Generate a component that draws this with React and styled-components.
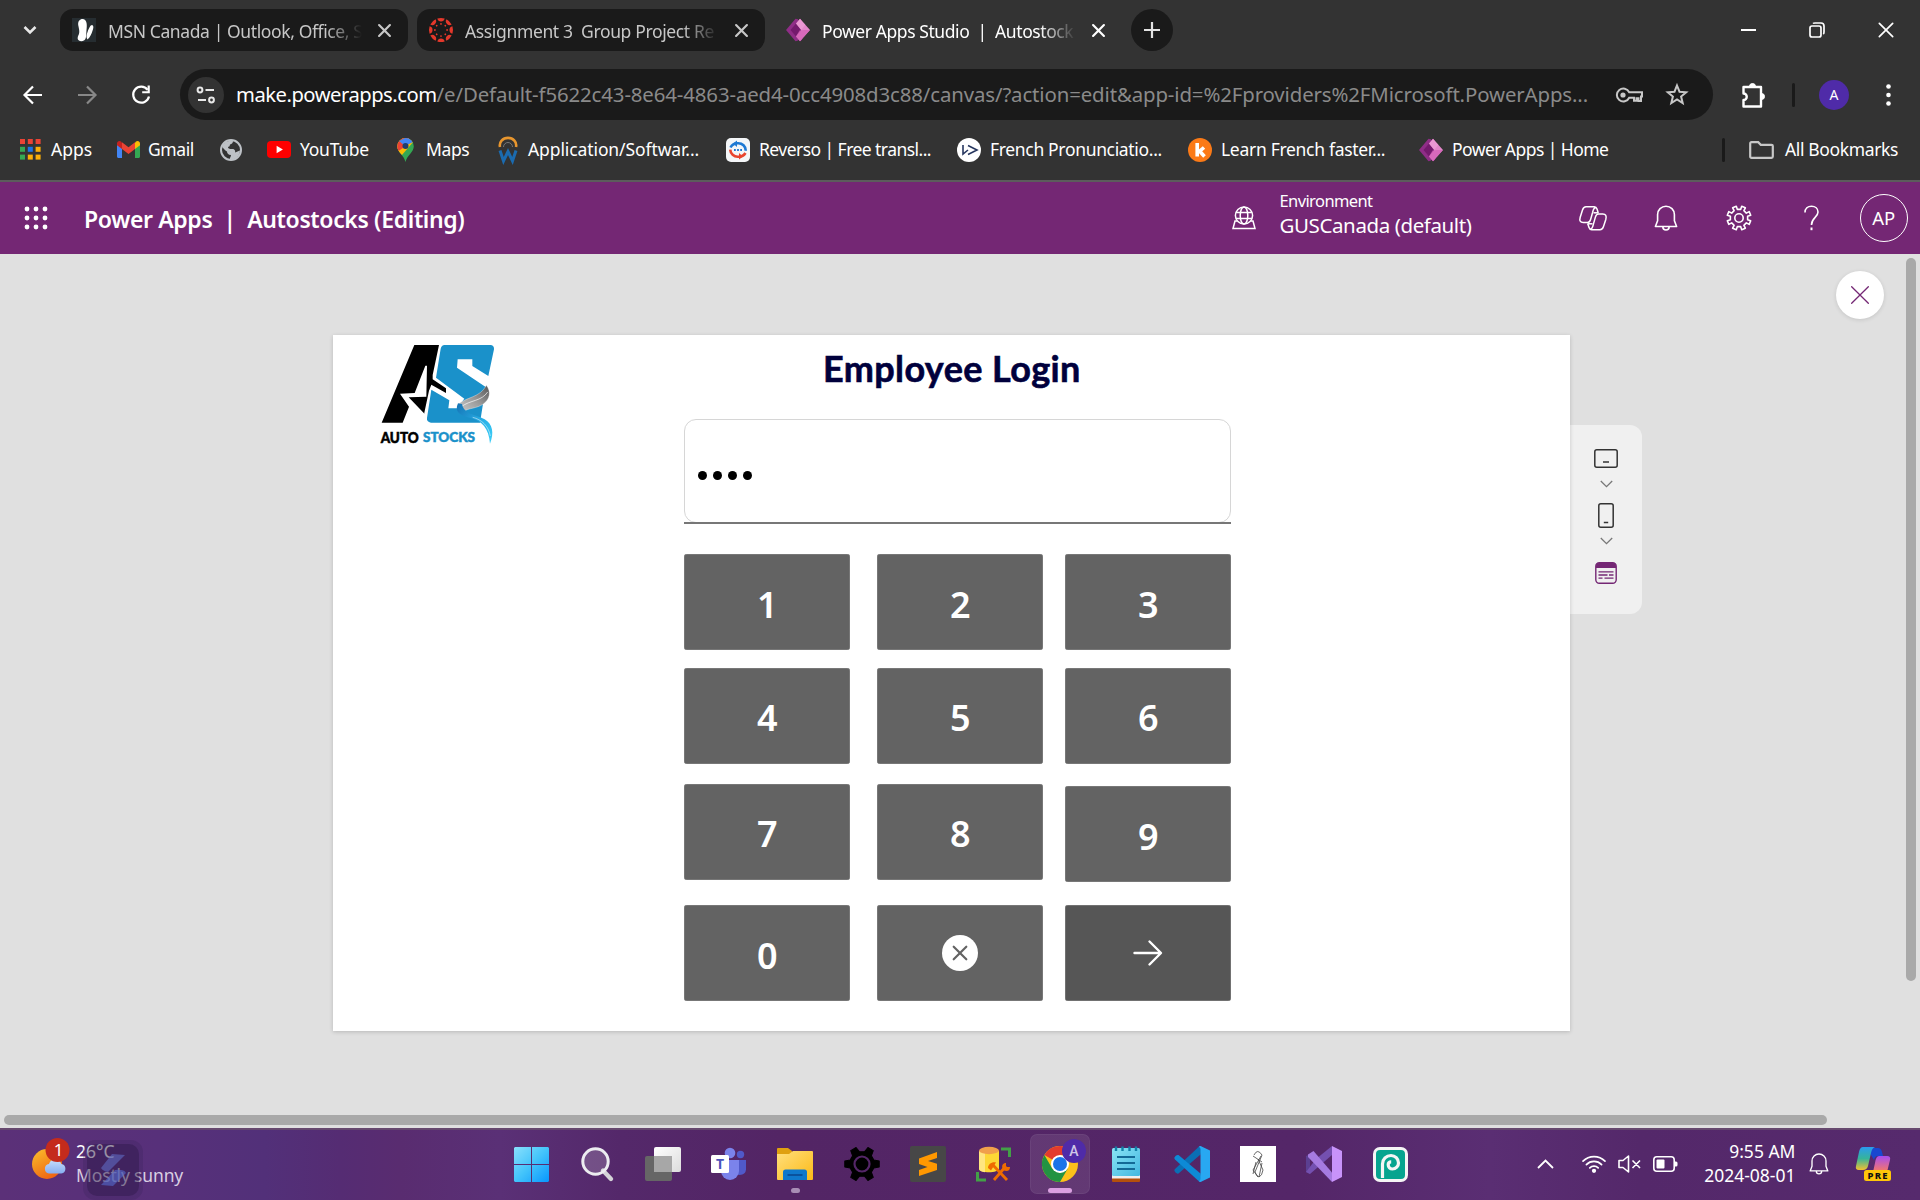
import React from "react";
import styled, { createGlobalStyle } from "styled-components";

const Global = createGlobalStyle`
  *{box-sizing:border-box}
  html,body{margin:0;padding:0;overflow:hidden}
  body{font-family:"Noto Sans","Open Sans",sans-serif;width:1920px;height:1200px}
  svg{display:block;flex:none;overflow:visible}
`;
const Desktop = styled.div`width:1920px;height:1200px;display:flex;flex-direction:column;overflow:hidden;`;
const Label = styled.span`
  font-size:${p => p.$s || 17.5}px;letter-spacing:${p => p.$ls || 0}px;font-weight:${p => p.$b || 400};
  color:${p => p.$c || "#fff"};white-space:pre;line-height:1.36;display:inline-block;
`;

/* ---------- browser ---------- */
const Browser = styled.header`height:182px;background:#333;border-bottom:2px solid #5c5c5c;flex:none;`;
const TabStrip = styled.div`height:60px;display:flex;align-items:center;padding:0 0 0 20px;`;
const Tab = styled.div`
  height:42px;width:${p => p.$w}px;margin-left:${p => p.$ml || 0}px;border-radius:13px;padding:0 17.500px 0 12px;
  background:${p => (p.$active ? "transparent" : "#1a1a1a")};display:flex;align-items:center;gap:12px;
`;
const TabTitle = styled.div`
  width:${p => p.$w}px;overflow:hidden;white-space:nowrap;padding-top:3px;
  mask-image:linear-gradient(90deg,#000 ${p => p.$w - 36}px,transparent);
`;
const TabClose = styled.div`margin-left:auto;`;
const NewTab = styled.div`width:42px;height:42px;border-radius:50%;background:#1a1a1a;display:grid;place-items:center;margin-left:9px;`;
const WindowButtons = styled.div`margin-left:auto;display:flex;`;
const WindowButton = styled.div`width:68.5px;height:60px;display:grid;place-items:center;`;
const Toolbar = styled.div`height:69px;display:flex;align-items:center;padding-left:6px;`;
const ToolButton = styled.div`width:${p => p.$w || 54}px;display:grid;place-items:center;flex:none;`;
const Omnibox = styled.div`width:1533px;flex:none;height:51px;margin-left:12px;border-radius:26px;background:#1a1a1a;display:flex;align-items:center;padding-left:8px;`;
const SiteInfo = styled.div`width:36px;height:36px;border-radius:50%;background:#333;display:grid;place-items:center;flex:none;`;
const Url = styled.div`width:1384px;padding-left:12px;white-space:nowrap;flex:none;`;
const Divider = styled.div`width:3px;height:24px;border-radius:2px;background:#1a1a1a;flex:none;`;
const Avatar = styled.div`width:30px;height:30px;border-radius:50%;background:#4f2ba8;display:grid;place-items:center;margin:0 0 0 24px;flex:none;`;
const Bookmarks = styled.div`height:51px;padding:0 0 9px 20px;display:flex;align-items:center;`;
const Bookmark = styled.div`width:${p => p.$w}px;display:flex;align-items:center;flex:none;`;
const BookIcon = styled.div`width:${p => p.$w || 32}px;padding-left:${p => p.$pl || 0}px;display:flex;align-items:center;flex:none;`;

const X = ({ s = 13, c = "#e3e3e3", w = 2.2 }) => (
  <svg width={s} height={s} viewBox="0 0 12 12"><path d="M1 1 11 11M11 1 1 11" stroke={c} strokeWidth={w * 12 / s} fill="none" strokeLinecap="round" /></svg>
);
const PowerApps = () => (
  <svg width="24" height="24" viewBox="0 0 24 24">
    <path d="M9.5.8 0 12l9.5 11.2 2.6-.6L14.5 12 12 1.2z" fill="#8f2d87" />
    <path d="M14 .8 4.5 12 14 23.200 16 22 18 12 15 1.500z" fill="#741a6d" />
    <path d="M14 .8 24 12 14 23.200 10 18.500 15.200 12 10 5.500z" fill="#e287c9" />
    <path d="m18.500 12-5 .5-3.500 6L14 23.200 24 12z" fill="#d35fb5" opacity=".75" />
    <path d="m14 .8 5.300 6L15.200 12 10 5.500z" fill="#f0a3da" opacity=".6" />
  </svg>
);
const Msn = () => (
  <svg width="24" height="24" viewBox="0 0 24 24"><rect width="24" height="24" fill="#262d31" />
    <path d="M12.300 22.300C8.500 24.500 4 22.500 6.300 17.500 8 14.500 7.200 12 6.300 7.500 5.500 3 8 .8 11 1c4.500.8 4 7 3.500 11-.4 4 .3 8.500-2.200 10.300z" fill="#fff" />
    <path d="M15.500 21.500c-1.700-2-1-5 .2-8C17 10.500 18.500 6.500 20.500 7.200c1.500.8.8 3.500 0 5.500-1 3-2.500 7-5 8.800z" fill="#fff" /></svg>
);
const Canvas = () => (
  <svg width="24" height="24" viewBox="-12 -12 24 24">
    {[0, 45, 90, 135, 180, 225, 270, 315].map(a => (
      <g key={a} transform={`rotate(${a})`} fill="#e4382b">
        <path d="M-3.700-11.400A12 12 0 0 1 3.700-11.400 3.800 3.800 0 0 1-3.700-11.400z" />
        <circle cx="0" cy="-6.100" r="0.900" /></g>))}
  </svg>
);
const Back = ({ c = "#fff" }) => (
  <svg width="20" height="20" viewBox="0 0 20 20"><path d="M19 10H2M10 1.500 1.500 10l8.500 8.500" fill="none" stroke={c} strokeWidth="2.200" /></svg>
);
const Forward = ({ c = "#888" }) => (
  <svg width="20" height="20" viewBox="0 0 20 20"><path d="M1 10h17M10 1.500 18.500 10 10 18.500" fill="none" stroke={c} strokeWidth="2.200" /></svg>
);
const Reload = () => (
  <svg width="20" height="20" viewBox="0 0 20 20"><path d="M16.600 4.800A8 8 0 1 0 18 11.500" fill="none" stroke="#fff" strokeWidth="2.200" /><path d="M18.800.5v7.700h-7.600v-2h5.400V.5z" fill="#fff" /></svg>
);
const Tune = () => (
  <svg width="20" height="18" viewBox="0 0 20 18" fill="none" stroke="#e8e8e8" strokeWidth="2"><circle cx="4" cy="4" r="2.400" /><path d="M9.500 4H18M2 14h8" /><circle cx="15.500" cy="14" r="2.400" /></svg>
);
const KeyIcon = () => (
  <svg width="28" height="16" viewBox="0 0 28 16" fill="none" stroke="#c7c7c7" strokeWidth="2"><path d="M14.200 5.200A6.500 6.500 0 1 0 14.200 10.800H19v3h2.500v-2.500h2V14H26V9.500h1V5.200z" /><circle cx="8" cy="8" r="2.600" fill="#c7c7c7" stroke="none" /></svg>
);
const Star = () => (
  <svg width="24" height="23" viewBox="0 0 24 23" fill="none" stroke="#c7c7c7" strokeWidth="2"><path d="m12 2.500 2.500 6.200 6.700.5-5.100 4.300 1.600 6.500-5.700-3.500L6.300 20l1.600-6.500L2.800 9.200l6.700-.5z" /></svg>
);
const Puzzle = () => (
  <svg width="24" height="28" viewBox="0 0 24 28"><path d="M2.500 6H20V25.500H2.500V19a3.200 3.200 0 0 0 0-6.500z" fill="none" stroke="#fff" strokeWidth="2.400" strokeLinejoin="round" /><path d="M8.500 5.500a3 3 0 0 1 6 0zM20.500 12.500a3 3 0 0 1 0 6z" fill="#fff" stroke="#fff" /></svg>
);
const AppsIcon = () => {
  const c = ["#ea4335", "#ea4335", "#ea4335", "#34a853", "#1a73e8", "#fbaf08", "#34a853", "#fbaf08", "#fbaf08"];
  return <svg width="21" height="21" viewBox="0 0 21 21">{c.map((f, i) => <rect key={i} x={(i % 3) * 7.800} y={Math.floor(i / 3) * 7.800} width="5" height="5" fill={f} />)}</svg>;
};
const Gmail = () => (
  <svg width="23" height="17" viewBox="0 0 23 17"><path d="M0 2v13.500C0 16.400.7 17 1.500 17H5V7z" fill="#4285f4" /><path d="M23 2v13.500c0 .9-.7 1.500-1.500 1.500H18V7z" fill="#34a853" /><path d="M18 2v6l5-3.700V2.500C23 .2 20.500-.7 18.700.7z" fill="#fbbc04" /><path d="M0 2.500v1.800L5 8V2L4.300.7C2.500-.7 0 .2 0 2.500z" fill="#c5221f" /><path d="M5 1.200v6.700l6.500 5 6.500-5V1.200l-6.500 5z" fill="#ea4335" /></svg>
);
const Globe = () => (
  <svg width="22" height="22" viewBox="0 0 22 22"><circle cx="11" cy="11" r="10" fill="#333" stroke="#bdc1c6" strokeWidth="2" /><path d="M2 8C4 3 9 1 13 2c0 2-1 3-3 3.500-.5 1.500 0 2-2 2.500 0 1.500 1 2 4 2s3.500 2 3 3.500c2-.5 3-1.500 5-2-.5 6-5 9.500-10 9-.5-2 1-2.500 1-4.500-3 0-4-2-4-3.500C5 12 4.500 10 2 8z" fill="#bdc1c6" /></svg>
);
const YouTube = () => (<svg width="24" height="17" viewBox="0 0 24 17"><rect width="24" height="17" rx="4" fill="#f00" /><path d="m9.600 4.800 6.300 3.700-6.300 3.700z" fill="#fff" /></svg>);
const Maps = () => (
  <svg width="17" height="24" viewBox="0 0 17 24"><defs><clipPath id="pin"><path d="M8.500 0A8.300 8.300 0 0 0 .2 8.300c0 6 6.500 8.500 8.300 15.700 1.800-7.200 8.300-9.700 8.300-15.700A8.300 8.300 0 0 0 8.500 0z" /></clipPath></defs>
    <g clipPath="url(#pin)"><rect width="17" height="24" fill="#34a853" /><path d="M0 0h17v3L5 17 0 13z" fill="#fbbc04" /><path d="M0 0h12L6 10 0 14z" fill="#ea4335" /><path d="M2 3 8 0h9v3.500L8 8z" fill="#4285f4" /></g><circle cx="8.500" cy="8" r="3" fill="#1f3d6e" /></svg>
);
const WpIcon = () => (
  <svg width="20" height="24" viewBox="0 0 20 24"><path d="M2 9A8.200 7.500 0 1 1 18 9" fill="none" stroke="#e8962e" strokeWidth="2.600" /><path d="M5.500 9a4.500 4.500 0 0 1 9 0" fill="none" stroke="#777" strokeWidth="1" /><path d="M2 12.500 5.500 23 10 13.500 14.500 23 18 12.500" fill="none" stroke="#1b6bb0" strokeWidth="3" /></svg>
);
const Reverso = () => (
  <svg width="24" height="24" viewBox="0 0 24 24"><rect width="24" height="24" rx="5" fill="#f4f6f8" /><path d="M4.500 9.500A8 8 0 0 1 12 5.200a7.500 7.500 0 0 1 7.800 7.500" fill="none" stroke="#1f79d3" strokeWidth="2.600" /><path d="m7 5.500 4-3v6.500z" fill="#1f79d3" /><path d="M19.500 15A8 8 0 0 1 12 18.700a7.500 7.500 0 0 1-7.800-7" fill="none" stroke="#e8452f" strokeWidth="2.600" /><path d="m17 18.500-4 3V15z" fill="#e8452f" /><path d="M8 12h1.800M11.100 12h1.800M14.200 12H16" stroke="#1f79d3" strokeWidth="1.800" /></svg>
);
const FrenchIcon = () => (<svg width="24" height="24" viewBox="0 0 24 24"><circle cx="12" cy="12" r="12" fill="#fff" /><path d="M6 7v9l5-4M11 7.500l9 4.500-9 4.500" fill="none" stroke="#27375f" strokeWidth="1.600" /></svg>);
const Kwiziq = () => (<svg width="24" height="24" viewBox="0 0 24 24"><circle cx="12" cy="12" r="12" fill="#fb7a17" /><path d="M9.200 5v13.500M16 9.500l-5.500 4.700M11.500 13l5 5.500" stroke="#fff" strokeWidth="3.600" fill="none" /></svg>);
const Folder = () => (<svg width="25" height="18" viewBox="0 0 25 18"><path d="M2.500 1.200h6.700l2.600 2.600h10.700c.8 0 1.300.6 1.300 1.300v10.400c0 .8-.5 1.300-1.300 1.300h-20c-.8 0-1.300-.5-1.300-1.300v-13c0-.8.5-1.300 1.300-1.300z" fill="none" stroke="#c7c7c7" strokeWidth="2.200" /></svg>);

/* ---------- power apps ---------- */
const AppBar = styled.div`height:72px;background:#742774;display:flex;align-items:center;flex:none;padding-left:23.500px;`;
const AppTitle = styled.div`margin-left:36.500px;width:1148px;padding-top:4px;flex:none;`;
const EnvText = styled.div`width:276.500px;margin-left:23.500px;padding-bottom:6px;display:flex;flex-direction:column;flex:none;`;
const BarIcon = styled.div`width:73.200px;display:grid;place-items:center;flex:none;`;
const UserCircle = styled.div`width:48px;height:48px;border:1.500px solid #fff;border-radius:50%;display:grid;place-items:center;margin-left:11px;flex:none;`;
const Workspace = styled.main`height:874px;background:#e0e0e0;position:relative;padding:81px 0 0 333px;display:flex;align-items:flex-start;flex:none;`;
const Page = styled.section`width:1237px;height:696px;background:#fff;box-shadow:0 1px 4px rgba(0,0,0,.18);display:flex;z-index:1;`;
const LogoBox = styled.div`width:351.400px;padding:8px 0 0 47px;flex:none;`;
const Login = styled.div`width:547px;display:flex;flex-direction:column;`;
const Heading = styled.h1`margin:0 0 0 -12px;height:84px;padding-top:11px;text-align:center;font:700 36px/44px Lato,sans-serif;letter-spacing:.4px;color:#00003c;-webkit-text-stroke:.6px #00003c;`;
const Pin = styled.div`height:104px;border:1px solid #d6d6d6;border-radius:12px;display:flex;align-items:center;gap:6px;padding:9px 0 0 13px;`;
const PinLine = styled.div`height:1.500px;background:#777;margin-top:-1px;margin-bottom:-.5px;`;
const PinDot = styled.i`width:9px;height:9px;border-radius:50%;background:#000;`;
const Keypad = styled.div`display:flex;margin-top:31px;`;
const KeyColumn = styled.div`width:${p => p.$w}px;margin-right:${p => p.$mr || 0}px;display:flex;flex-direction:column;`;
const Key = styled.button`
  border:0;padding:${p => (p.$icon ? 0 : 4)}px 0 ${p => (p.$icon ? 1 : 0)}px;height:96.300px;margin:${p => p.$mt}px 0 0;border-radius:3px;background:${p => (p.$dark ? "#565656" : "#636363")};
  color:#fff;font:600 36px "Noto Sans",sans-serif;display:grid;place-items:center;box-shadow:inset 0 0 0 .5px #8c8c8c;
`;
const SidePanel = styled.aside`width:72px;height:189px;margin-top:90px;background:#f0f0f0;border-radius:0 12px 12px 0;display:flex;flex-direction:column;align-items:center;padding-top:24px;`;
const ChevBox = styled.div`padding:${p => p.$t}px 0 ${p => p.$b}px;`;
const CloseButton = styled.div`position:absolute;left:1836px;top:17px;width:48px;height:48px;border-radius:50%;background:#fff;display:grid;place-items:center;box-shadow:0 1px 4px rgba(0,0,0,.12);`;
const VScroll = styled.div`position:absolute;left:1906px;top:4px;width:10px;height:723px;border-radius:5px;background:#a9a9a9;`;
const HScroll = styled.div`position:absolute;left:4px;top:861px;width:1823px;height:10px;border-radius:5px;background:#a9a9a9;`;

const Logo = () => (
  <svg width="116" height="103" viewBox="180 69 348 309">
    <defs>
      <linearGradient id="steel" x1="1" y1="0" x2="0" y2="1"><stop offset="0" stopColor="#555" /><stop offset=".5" stopColor="#999" /><stop offset="1" stopColor="#ccc" /></linearGradient>
      <linearGradient id="wave" x1="0" y1="0" x2="1" y2="1"><stop offset="0" stopColor="#1573b5" /><stop offset=".6" stopColor="#29b2e8" /><stop offset="1" stopColor="#3fd0f8" /></linearGradient>
    </defs>
    <path d="M283 75H357L338 165V178L378 205V219L334 194 327 212 312 283 268 246V258L248 308H185z" fill="#000" />
    <path d="M240 221 284 219 316 137H321L319 230 266 232 312 280V290L268 262z" fill="#fff" />
    <path d="M374 75H513Q523 77 522 88L505 168 457 138V118H413L411 143 497 201 480 308H333Q319 305 321 294L334 209 388 241 385 265H412L430 240 433 236 348 173 362 86Q364 76 374 75z" fill="#1a91ca" />
    <path d="M499 196C514 215 510 238 490 252 470 266 445 264 432 274L414 254C438 230 480 234 499 196z" fill="url(#steel)" stroke="#fff" strokeWidth="1" />
    <path d="M424 260C450 240 485 244 503 216" fill="none" stroke="#fff" strokeWidth="2" />
    <path d="M414 250C402 275 420 288 452 294 485 302 507 325 510 371 523 340 518 312 494 298 470 284 432 284 426 252z" fill="url(#wave)" />
    <path d="M458 292C484 298 506 318 511 348" fill="none" stroke="#fff" strokeWidth="1.500" />
    <text x="182" y="370" textLength="114" lengthAdjust="spacingAndGlyphs" fontFamily="Lato,sans-serif" fontWeight="900" fontSize="43" fill="#000" stroke="#000" strokeWidth="1.500">AUTO</text>
    <text x="309" y="366" textLength="156" lengthAdjust="spacingAndGlyphs" fontFamily="Lato,sans-serif" fontWeight="900" fontSize="39" fill="#1a91ca" stroke="#1a91ca" strokeWidth="1.500">STOCKS</text>
  </svg>
);
const Waffle = () => (<svg width="24" height="24" viewBox="0 0 24 24">{[3, 12, 21].map(y => [3, 12, 21].map(x => <circle key={x + "" + y} cx={x} cy={y} r="2.400" fill="#fff" />))}</svg>);
const EnvIcon = () => (
  <svg width="24" height="24" viewBox="0 0 24 24" fill="none" stroke="#fff" strokeWidth="1.500"><circle cx="12" cy="9.500" r="8.600" /><ellipse cx="12" cy="9.500" rx="3.800" ry="8.600" /><path d="M4 6.500h16M4 12.500h16M5 15H3L1 22.500h22L21 15h-2" /></svg>
);
const lobe = "M19.200 6.800 18 3C17.500 1.500 16.800.8 15.300.8H7C5 .8 4.200 1.800 3.500 4L1.200 11.200C.2 14.800 1.300 16.500 4.200 16.500H8.500C10.300 16.500 11 15.500 11.600 13.500L13.600 6.500C14.200 4 14.500 1.500 17 1.500";
const Copilot = () => (
  <svg width="28" height="25" viewBox="0 0 28 25" fill="none" stroke="#fff" strokeWidth="1.500" strokeLinejoin="round">
    <path d={lobe} /><path d={lobe} transform="rotate(180 14 12.300)" />
    <path d="M14.500 6.800h5" /><path d="M8.500 17.800h5" />
  </svg>
);
const Bell = ({ s = 24 }) => (<svg width={s} height={s * 26 / 24} viewBox="0 0 24 26" fill="none" stroke="#fff" strokeWidth="1.600" strokeLinejoin="round"><path d="M12 1.200c4.700 0 8.400 3.700 8.400 8.400v6.200l2.200 5.700H1.400l2.200-5.700V9.600C3.600 4.900 7.300 1.200 12 1.200zM8.800 21.800a3.200 3.200 0 0 0 6.400 0" /></svg>);
const gear = (n, ro, ri, t) => {
  let d = "";
  for (let i = 0; i < n; i++) {
    const c = (i * 2 * Math.PI) / n - Math.PI / 2, h = Math.PI / n;
    [[ri, -h * t[0]], [ro, -h * t[1]], [ro, h * t[1]], [ri, h * t[0]]].forEach(([r, a], j) => {
      d += `${i || j ? "L" : "M"}${(r * Math.cos(c + a)).toFixed(2)} ${(r * Math.sin(c + a)).toFixed(2)}`;
    });
  }
  return d + "z";
};
const Gear = () => (<svg width="26" height="26" viewBox="-13 -13 26 26" fill="none" stroke="#fff" strokeWidth="1.600" strokeLinejoin="round"><path d={gear(8, 12, 8.800, [0.5, 0.42])} transform="rotate(22.500)" /><circle r="4.200" /></svg>);
const Question = () => (<svg width="16" height="26" viewBox="0 0 16 26" fill="none" stroke="#fff" strokeWidth="1.600"><path d="M1 7.500C1 3.500 3.800 1.200 7.500 1.200S14 3.500 14 7c0 5.500-6.500 5.500-6.500 13" /><path d="M7.500 22.500v2.700" strokeWidth="2" /></svg>);
const Chev = () => (<svg width="13" height="8" viewBox="0 0 13 8"><path d="m.8 1 5.700 5.700L12.200 1" fill="none" stroke="#777" strokeWidth="1.300" /></svg>);

/* ---------- taskbar ---------- */
const Taskbar = styled.footer`
  height:72px;border-top:2px solid #67496f;padding-bottom:2px;display:flex;align-items:center;flex:none;position:relative;
  background:linear-gradient(90deg,#5b3078 0,#57307a 160px,#523079 265px,#552c73 340px,#592c70 400px,#5a3076 500px,#54286a 620px,#532565 780px,#542668 1300px,#5a2e73 1490px,#54286a 1640px,#562a6d 1920px);
`;
const Weather = styled.div`width:498px;display:flex;align-items:center;padding-left:30px;flex:none;`;
const WeatherText = styled.div`display:flex;flex-direction:column;margin-left:8px;`;
const Slot = styled.div`width:66.100px;height:60px;display:grid;place-items:center;position:relative;flex:none;`;
const Tile = styled.div`width:60px;height:60px;border-radius:7px;background:rgba(255,255,255,.09);box-shadow:inset 0 0 0 1px rgba(255,255,255,.05);display:grid;place-items:center;`;
const Mark = styled.i`position:absolute;bottom:1px;left:${p => 33 - p.$w / 2}px;width:${p => p.$w}px;height:5px;border-radius:3px;background:${p => p.$c};`;
const Tray = styled.div`flex:1;display:flex;align-items:center;justify-content:flex-end;padding-right:29px;`;
const Clock = styled.div`display:flex;flex-direction:column;align-items:flex-end;width:107px;`;
const TrayEnd = styled.div`margin-left:12.500px;`;
const Ghost = styled.div`position:absolute;left:83px;top:10px;width:60px;height:60px;border-radius:12px;background:rgba(50,30,80,.22);display:grid;place-items:center;`;
const GhostInner = styled.div`width:52px;height:52px;border-radius:10px;background:rgba(35,20,60,.32);display:grid;place-items:center;`;

const Sun = () => (
  <svg width="38" height="44" viewBox="0 0 38 44">
    <defs><linearGradient id="sun" x1="0" y1="0" x2=".6" y2="1"><stop offset="0" stopColor="#fbc02b" /><stop offset="1" stopColor="#ef6412" /></linearGradient><linearGradient id="cloud" x1="0" y1="0" x2="0" y2="1"><stop offset="0" stopColor="#c7ddfb" /><stop offset="1" stopColor="#86aef0" /></linearGradient></defs>
    <circle cx="17" cy="22" r="15" fill="url(#sun)" /><path d="M19 31.500a4.800 4.800 0 0 1 0-9.500 6.500 6.500 0 0 1 12.300 0 4.800 4.800 0 0 1 0 9.500z" fill="url(#cloud)" />
    <circle cx="27.500" cy="8" r="12" fill="#c42b1c" /><text x="28.500" y="14" textAnchor="middle" fontFamily="Noto Sans" fontSize="17" fill="#fff">1</text>
  </svg>
);
const Win = () => (<svg width="35" height="35" viewBox="0 0 35 35"><defs><linearGradient id="win" x1="0" y1="0" x2="1" y2="1"><stop offset="0" stopColor="#8ae0fb" /><stop offset=".5" stopColor="#43c4fb" /><stop offset="1" stopColor="#0896fd" /></linearGradient></defs><path d="M1 0h16v17H0V1zM18 0h16l1 1v16H18zM0 18h17v17H1l-1-1zM18 18h17v16l-1 1H18z" fill="url(#win)" /></svg>);
const Search = () => (<svg width="32" height="34" viewBox="0 0 32 34"><path d="m22 23.500 8 8.500" stroke="#d4d4d8" strokeWidth="4.400" strokeLinecap="round" /><circle cx="14.500" cy="14.500" r="12.700" fill="rgba(255,255,255,.18)" stroke="#ececf0" strokeWidth="3" /></svg>);
const TaskView = () => (<svg width="36" height="34" viewBox="0 0 36 34"><defs><linearGradient id="tv" x1="0" y1="0" x2="1" y2="1"><stop offset="0" stopColor="#fff" /><stop offset="1" stopColor="#dcdcdc" /></linearGradient></defs><rect y="9" width="27" height="25" rx="2" fill="#666" /><rect x="9" width="27" height="25" rx="2" fill="url(#tv)" /><path d="M9 9h18v16H9z" fill="#a7a7a7" /></svg>);
const Teams = () => (
  <svg width="36" height="34" viewBox="0 0 36 34"><circle cx="29.500" cy="7.500" r="3.700" fill="#5059c9" /><circle cx="19" cy="6" r="5.300" fill="#7b83eb" /><path d="M25 13h10v9.500a6 6 0 0 1-10 4z" fill="#5059c9" /><path d="M10 13h18v11a9 9 0 0 1-18 0z" fill="#7b83eb" /><rect y="8" width="18" height="18" rx="1.500" fill="#fff" /><text x="9" y="22" textAnchor="middle" fontFamily="Noto Sans" fontWeight="700" fontSize="14" fill="#4b53bc">T</text></svg>
);
const Explorer = () => (<svg width="36" height="34" viewBox="0 0 36 34"><defs><linearGradient id="ex" x1="0" y1="0" x2="1" y2="1"><stop offset="0" stopColor="#ffdf7d" /><stop offset="1" stopColor="#fcba17" /></linearGradient></defs><path d="M0 2Q0 1 1 1h10l4 3v4H0z" fill="#dfa010" /><path d="M0 7h12l4-3h19q1 0 1 1v27q0 1-1 1H1q-1 0-1-1z" fill="url(#ex)" /><path d="M6 33V25q0-2.500 2.500-2.500h19Q30 22.500 30 25v8z" fill="#0f78cc" /><path d="M10.500 28h15" stroke="#0b4f98" strokeWidth="1.800" /></svg>);
const Settings = () => (<svg width="36" height="36" viewBox="-18 -18 36 36"><path d={gear(6, 17.500, 12.500, [0.62, 0.34])} transform="rotate(30)" fill="#000" stroke="#000" strokeLinejoin="round" /><circle r="7.500" fill="#000" stroke="#542668" strokeWidth="2.200" /></svg>);
const Sublime = () => (<svg width="36" height="36" viewBox="0 0 36 36"><rect width="36" height="36" rx="2" fill="#474747" /><path d="m9 12.500 18-6.500v6L18 15l9 2.800V24L9 30v-6l8.500-3L9 18z" fill="#ff9800" /></svg>);
const Db = () => (<svg width="36" height="36" viewBox="0 0 36 36"><path d="M3 5v17.500c0 5 20 5 20 0V5z" fill="#fdd835" /><path d="M3 5v17.500c0 2 2.500 3.400 6 3.800V6z" fill="#ffe680" /><ellipse cx="13" cy="4.500" rx="10" ry="3.700" fill="#f0a04b" /><path d="M25 3h8.500v8M1.500 26v8H10" stroke="#43a047" strokeWidth="3" fill="none" /><path d="m18 34 12-14M16 18l15 16" stroke="#ef6c00" strokeWidth="2.800" /><path d="M12 22c0-4 4-6.500 8-5.500l-5 8zM27 24c-2-5 0-7 3-7v4h4c0 4-3 5-7 3z" fill="#ef6c00" /></svg>);
const Chrome = () => (
  <svg width="36" height="36" viewBox="0 0 36 36"><circle cx="18" cy="18" r="18" fill="#fcc11a" /><path d="M18 18 2.400 9A18 18 0 0 1 33.600 9H18z" fill="#e33b2e" /><path d="M2.400 9A18 18 0 0 0 18 36L25.800 22.500 18 27 10.200 22.500z" fill="#229342" /><circle cx="18" cy="18" r="9" fill="#fff" /><circle cx="18" cy="18" r="7" fill="#1a73e8" /><circle cx="32" cy="5" r="12" fill="#4f2ba8" /><text x="32" y="10" textAnchor="middle" fontFamily="Roboto" fontWeight="500" fontSize="14" fill="#cfc6e8">A</text></svg>
);
const Notepad = () => (<svg width="28" height="36" viewBox="0 0 28 36"><defs><linearGradient id="np" x1="0" y1="0" x2="1" y2="1"><stop offset="0" stopColor="#8ae4f5" /><stop offset="1" stopColor="#42b8e0" /></linearGradient></defs><rect y="31" width="28" height="5" rx="1" fill="#b4500c" /><rect y="29" width="28" height="3.500" fill="#eee" /><rect y="2" width="28" height="28" rx="1.500" fill="url(#np)" /><path d="M5 11h18M5 17h18M5 23h18" stroke="#136a96" strokeWidth="1.800" /><path d="M4 .5V5M10.500.5V5M17.500.5V5M24 .5V5" stroke="#1280a8" strokeWidth="2.400" /></svg>);
const VsCode = () => (<svg width="36" height="36" viewBox="0 0 36 36"><path d="M26.500 8.500 4.500 27.500Q3 28 1.500 26.500L.5 25Q0 24 1 23L24 1.500Q26 0 28 1z" fill="#0a6fb5" /><path d="M26.500 27.500 4.500 9Q3 8.500 1.500 10l-1 1.500Q0 12.500 1 13.500L24 34.500Q26 36 28 35z" fill="#0d8ad6" /><path d="M26.500 0 36 4.500v27L26.500 36Q25.500 36 24.500 35q2 0 2-2V3q0-2-2-2Q25.500 0 26.500 0z" fill="#28a8f2" /></svg>);
const Sketch = () => (<svg width="36" height="36" viewBox="0 0 36 36"><rect width="36" height="36" fill="#fff" /><path d="M14 9q3.500-7 8 0l-7 17q2 5 4 5 3-1 4-7L18 13M13 10l9 6M13 28l3-12M21 10 13 24l5 7M19 31l3-14" fill="none" stroke="#444" strokeWidth=".8" /></svg>);
const Vs = () => (<svg width="36" height="36" viewBox="0 0 36 36"><path d="M0 10 4 8V28L0 26z" fill="#5b3f91" /><path d="M4 28 26 9V0L10 13 0 26z" fill="#7450b0" /><path d="M2 8.500 7.500 5 26 26.500V36L2 11z" fill="#a67be0" /><path d="M26 0l10 5v26l-10 5z" fill="#c893fa" /></svg>);
const Photopea = () => (<svg width="35" height="35" viewBox="0 0 35 35"><rect x="1.500" y="1.500" width="32" height="32" rx="5.500" fill="#06a48f" stroke="#f5f5f5" strokeWidth="3" /><path d="M9.500 31V17A8.500 8.500 0 0 1 18 8.500a7.500 7.500 0 0 1 7.500 7.500 6 6 0 0 1-6 6 4.200 4.200 0 0 1-4.300-4.200c0-1.800 1.300-3 3-3" fill="none" stroke="#f5f5f5" strokeWidth="3.200" /></svg>);
const Wifi = () => (<svg width="24" height="18" viewBox="0 0 24 18" fill="none" stroke="#fff" strokeWidth="1.700" strokeLinecap="round"><path d="M1 6.200a15.500 15.500 0 0 1 22 0M4.400 9.600a10.700 10.700 0 0 1 15.200 0M7.800 12.800a6 6 0 0 1 8.400 0" /><circle cx="12" cy="15.800" r="1.300" fill="#fff" /></svg>);
const Mute = () => (<svg width="24" height="18" viewBox="0 0 24 18" fill="none" stroke="#fff" strokeWidth="1.600" strokeLinejoin="round"><path d="M1 5.500h4L10.500 1v16L5 12.500H1zM14.500 5.500l7.500 7.500M22 5.500 14.500 13" /></svg>);
const Battery = () => (<svg width="25" height="16" viewBox="0 0 25 16"><rect x=".8" y=".8" width="20.400" height="14.400" rx="3" fill="none" stroke="#fff" strokeWidth="1.600" /><rect x="3.500" y="3.500" width="8" height="9" rx="1" fill="#fff" /><path d="M22 5.500h1q1.500 0 1.500 1.500v2q0 1.500-1.500 1.500h-1z" fill="#fff" /></svg>);
const CopilotPre = () => (
  <svg width="36" height="36" viewBox="0 0 36 36"><defs><linearGradient id="c1" x1="0" y1="0" x2="0" y2="1"><stop offset="0" stopColor="#2b9bf0" /><stop offset=".5" stopColor="#36b49a" /><stop offset="1" stopColor="#f4c030" /></linearGradient><linearGradient id="c2" x1="0" y1="0" x2="0" y2="1"><stop offset="0" stopColor="#a64df0" /><stop offset="1" stopColor="#fb7a60" /></linearGradient></defs>
    <path d="M12 2h11q3 0 4 4l1 4h-5q-3 0-4 4z" fill="#1847d0" /><path d="M24 10h8q4 0 3 4l-3 12H18l2-9q1-7 4-7z" fill="url(#c2)" /><path d="M8 1h12q-3 1-4 6l-3 13q-1 4-5 4H4q-4 0-3-4L4 6q1-5 4-5z" fill="url(#c1)" />
    <rect x="9" y="24" width="27" height="11" rx="2.500" fill="#ffc60a" /><text x="12.500" y="33" textLength="20" fontFamily="Noto Sans" fontWeight="800" fontSize="9.500" fill="#111">PRE</text></svg>
);
const Flow = () => (<svg width="26" height="34" viewBox="0 0 26 34" opacity=".6"><path d="M12 1 25 2 8 19q-5-1-7-4z" fill="#5f6bc4" /><path d="M15 17q9-1 11 3l-13 13-12-1z" fill="#546bd0" /></svg>);

const bookmarks = [
  { i: <AppsIcon />, t: "Apps", w: 97, iw: 31 },
  { i: <Gmail />, t: "Gmail", w: 103, iw: 31, ls: -0.4 },
  { i: <Globe />, t: "", w: 47 },
  { i: <YouTube />, t: "YouTube", w: 130, iw: 33, ls: -0.26 },
  { i: <Maps />, t: "Maps", w: 101, iw: 29, ls: -0.4 },
  { i: <WpIcon />, t: "Application/Softwar...", w: 228, iw: 30, ls: -0.1 },
  { i: <Reverso />, t: "Reverso | Free transl...", w: 231, iw: 33, ls: -0.55 },
  { i: <FrenchIcon />, t: "French Pronunciatio...", w: 231, iw: 33, ls: -0.33 },
  { i: <Kwiziq />, t: "Learn French faster...", w: 231, iw: 33, ls: -0.3 },
  { i: <PowerApps />, t: "Power Apps | Home", w: 303, iw: 33, ls: -0.56 },
];
const barIcons = [<Copilot />, <Bell />, <Gear />, <Question />];

export default function App() {
  return (
    <Desktop>
      <Global />
      <Browser>
        <TabStrip>
          <svg width="20" height="20" viewBox="0 0 20 20"><path d="m4.500 7 5.500 5.500L15.500 7" fill="none" stroke="#e8e8e8" strokeWidth="2.600" /></svg>
          <Tab $w={348} $ml={20}><Msn /><TabTitle $w={254}><Label $c="#c7c7c7" $ls={-0.39}>MSN Canada | Outlook, Office, S</Label></TabTitle><TabClose><X c="#c7c7c7" /></TabClose></Tab>
          <Tab $w={348} $ml={9}><Canvas /><TabTitle $w={254}><Label $c="#c7c7c7" $ls={-0.36}>Assignment 3  Group Project Re</Label></TabTitle><TabClose><X c="#c7c7c7" /></TabClose></Tab>
          <Tab $w={348} $ml={9} $active><PowerApps /><TabTitle $w={254}><Label $ls={-0.42}>Power Apps Studio  |  Autostock</Label></TabTitle><TabClose><X c="#fff" /></TabClose></Tab>
          <NewTab><svg width="16" height="16" viewBox="0 0 16 16"><path d="M8 0v16M0 8h16" stroke="#e3e3e3" strokeWidth="2.200" /></svg></NewTab>
          <WindowButtons>
            <WindowButton><svg width="15" height="3"><rect width="15" height="2" fill="#fff" /></svg></WindowButton>
            <WindowButton><svg width="16" height="16" viewBox="0 0 16 16" fill="none" stroke="#fff" strokeWidth="1.700"><rect x="1" y="4" width="11" height="11" rx="2" /><path d="M4 1.500Q4.500 1 6 1h6q3 0 3 3v6q0 1.500-.8 2" /></svg></WindowButton>
            <WindowButton><X s={16} c="#fff" w={1.700} /></WindowButton>
          </WindowButtons>
        </TabStrip>
        <Toolbar>
          <ToolButton><Back /></ToolButton><ToolButton><Forward /></ToolButton><ToolButton><Reload /></ToolButton>
          <Omnibox>
            <SiteInfo><Tune /></SiteInfo>
            <Url><Label $s={20.200} $ls={-0.48}>make.powerapps.com</Label><Label $s={20.400} $ls={-0.12} $c="#8a8a8a">/e/Default-f5622c43-8e64-4863-aed4-0cc4908d3c88/canvas/?action=edit&amp;app-id=%2Fproviders%2FMicrosoft.PowerApps...</Label></Url>
            <ToolButton $w={42}><KeyIcon /></ToolButton><ToolButton><Star /></ToolButton>
          </Omnibox>
          <ToolButton $w={79}><Puzzle /></ToolButton>
          <Divider /><Avatar><Label $s={14}>A</Label></Avatar>
          <ToolButton $w={78}><svg width="5" height="22" viewBox="0 0 5 22" fill="#fff"><circle cx="2.500" cy="2.500" r="2.300" /><circle cx="2.500" cy="11" r="2.300" /><circle cx="2.500" cy="19.500" r="2.300" /></svg></ToolButton>
        </Toolbar>
        <Bookmarks>
          {bookmarks.map(b => <Bookmark key={b.t} $w={b.w}><BookIcon $w={b.iw}>{b.i}</BookIcon><Label $ls={b.ls}>{b.t}</Label></Bookmark>)}
          <Divider /><Bookmark $w={180}><BookIcon $w={60} $pl={24}><Folder /></BookIcon><Label $ls={-0.37}>All Bookmarks</Label></Bookmark>
        </Bookmarks>
      </Browser>

      <AppBar>
        <Waffle />
        <AppTitle><Label $s={23} $b={600} $ls={-0.36}>Power Apps  |  Autostocks (Editing)</Label></AppTitle>
        <EnvIcon />
        <EnvText><Label $s={16.500} $ls={-0.6}>Environment</Label><Label $s={20.500} $ls={-0.4}>GUSCanada (default)</Label></EnvText>
        {barIcons.map((icon, i) => <BarIcon key={i}>{icon}</BarIcon>)}
        <UserCircle><Label $s={18.500}>AP</Label></UserCircle>
      </AppBar>

      <Workspace>
        <Page>
          <LogoBox><Logo /></LogoBox>
          <Login>
            <Heading>Employee Login</Heading>
            <Pin><PinDot /><PinDot /><PinDot /><PinDot /></Pin><PinLine />
            <Keypad>
              <KeyColumn $w={166} $mr={27}><Key $mt={0}>1</Key><Key $mt={17.400}>4</Key><Key $mt={19.700}>7</Key><Key $mt={25}>0</Key></KeyColumn>
              <KeyColumn $w={166} $mr={22}><Key $mt={0}>2</Key><Key $mt={17.400}>5</Key><Key $mt={19.700}>8</Key>
                <Key $mt={25} $icon><svg width="36" height="36" viewBox="0 0 36 36"><circle cx="18" cy="18" r="18" fill="#fff" /><path d="m11.700 11.700 12.600 12.600M24.300 11.700 11.700 24.300" stroke="#636363" strokeWidth="2.200" strokeLinecap="round" /></svg></Key></KeyColumn>
              <KeyColumn $w={166}><Key $mt={0}>3</Key><Key $mt={17.400}>6</Key><Key $mt={22}>9</Key>
                <Key $mt={22.700} $dark $icon><svg width="30" height="28" viewBox="0 0 30 28"><path d="M1.500 14h26M16.500 2.500 28 14 16.500 25.500" fill="none" stroke="#fff" strokeWidth="2.400" strokeLinecap="round" strokeLinejoin="round" /></svg></Key></KeyColumn>
            </Keypad>
          </Login>
        </Page>
        <SidePanel>
          <svg width="24" height="19" viewBox="0 0 24 19"><rect x=".8" y=".8" width="22.400" height="17.400" rx="2" fill="none" stroke="#333" strokeWidth="1.500" /><path d="M9 13h6" stroke="#333" strokeWidth="1.500" /></svg>
          <ChevBox $t={11.500} $b={15.500}><Chev /></ChevBox>
          <svg width="16" height="25" viewBox="0 0 16 25"><rect x=".8" y=".8" width="14.400" height="23.400" rx="2" fill="none" stroke="#333" strokeWidth="1.500" /><path d="M5.800 19.500h4.400" stroke="#333" strokeWidth="1.500" /></svg>
          <ChevBox $t={8.500} $b={17}><Chev /></ChevBox>
          <svg width="22" height="22" viewBox="0 0 22 22"><rect x=".8" y=".8" width="20.400" height="20.400" rx="3.500" fill="none" stroke="#742774" strokeWidth="1.400" /><path d="M1 6V4q0-3 3-3h14q3 0 3 3v2z" fill="#742774" /><path d="M3.500 9.800h15M3.500 13h9M14 13h4.500M3.500 16.200h4M9.500 16.200h9" stroke="#742774" strokeWidth="1.300" /></svg>
        </SidePanel>
        <CloseButton><X s={20} c="#742774" w={1.300} /></CloseButton>
        <VScroll /><HScroll />
      </Workspace>

      <Taskbar>
        <Weather><Sun /><WeatherText><Label>26°C</Label><Label $c="#d9cfe2" $ls={-0.15}>Mostly sunny</Label></WeatherText></Weather>
        <Slot><Win /></Slot><Slot><Search /></Slot><Slot><TaskView /></Slot><Slot><Teams /></Slot>
        <Slot><Explorer /><Mark $w={9} $c="#a88db5" /></Slot>
        <Slot><Settings /></Slot><Slot><Sublime /></Slot><Slot><Db /></Slot>
        <Slot><Tile><Chrome /></Tile><Mark $w={24} $c="#dba0e2" /></Slot>
        <Slot><Notepad /></Slot><Slot><VsCode /></Slot><Slot><Sketch /></Slot><Slot><Vs /></Slot><Slot><Photopea /></Slot>
        <Tray>
          <ToolButton $w={50}><svg width="17" height="10" viewBox="0 0 17 10"><path d="m1 9 7.500-7.500L16 9" fill="none" stroke="#fff" strokeWidth="1.800" /></svg></ToolButton>
          <ToolButton $w={46}><Wifi /></ToolButton><ToolButton $w={26}><Mute /></ToolButton><ToolButton $w={46}><Battery /></ToolButton>
          <Clock><Label>9:55 AM</Label><Label>2024-08-01</Label></Clock>
          <ToolButton $w={47}><Bell s={20} /></ToolButton>
          <TrayEnd><CopilotPre /></TrayEnd>
        </Tray>
        <Ghost><GhostInner><Flow /></GhostInner></Ghost>
      </Taskbar>
    </Desktop>
  );
}
